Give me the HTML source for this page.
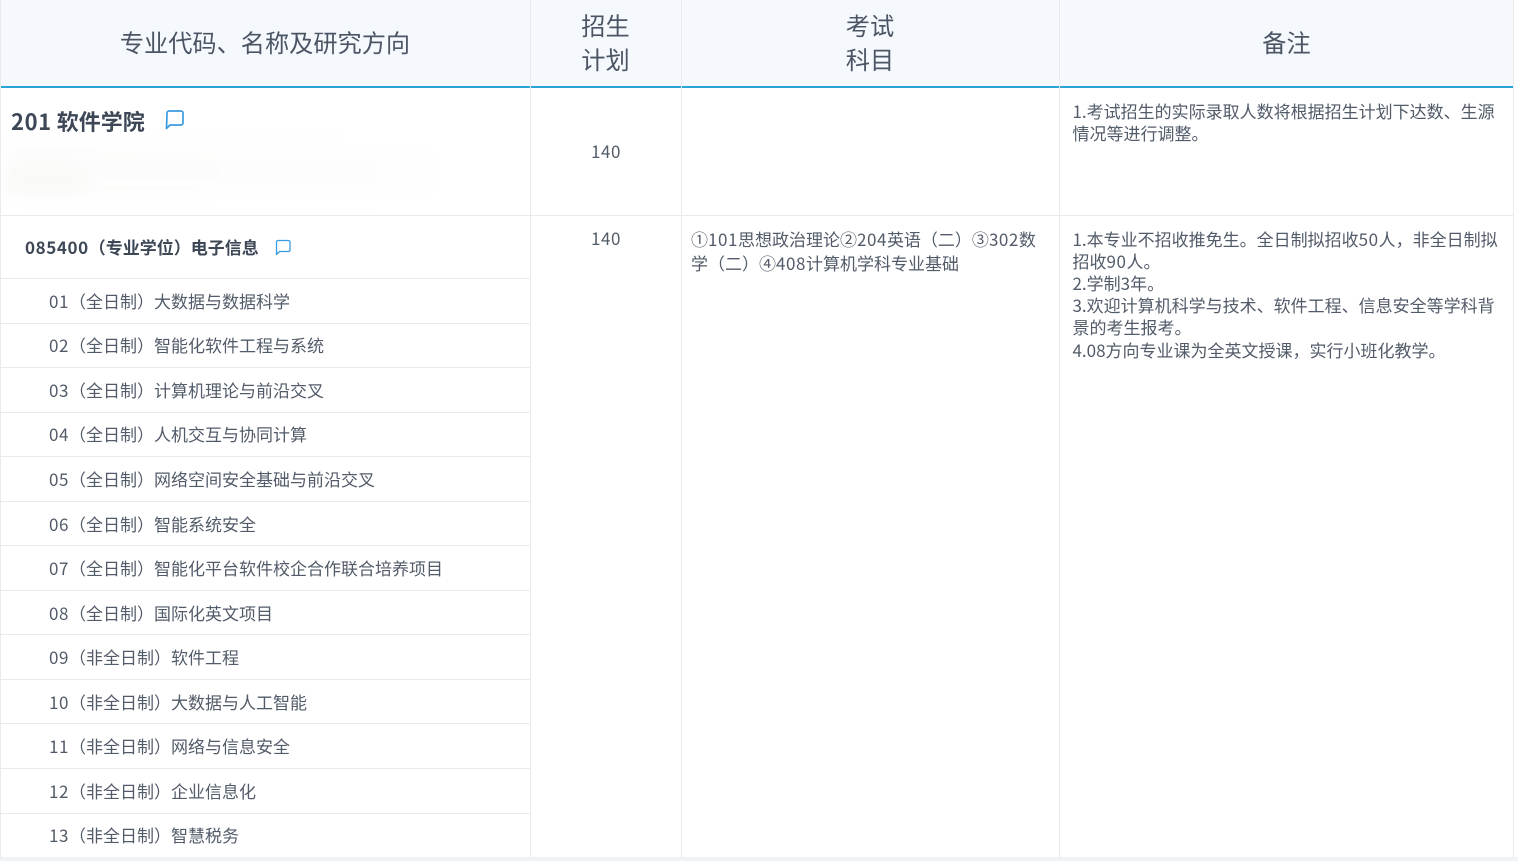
<!DOCTYPE html>
<html lang="zh-CN"><head><meta charset="utf-8"><title>专业目录</title>
<style>
html,body{margin:0;padding:0;background:#fff}
body{width:1518px;height:861px;position:relative;overflow:hidden;font-family:"Noto Sans CJK SC","Liberation Sans",sans-serif;color:#525b69;font-size:17px;font-weight:400}
.a{position:absolute}
.t{position:absolute;white-space:nowrap;line-height:22px}
.hd{position:absolute;color:#4c5564;font-size:24.2px;line-height:34px;text-align:center;font-weight:400}
.h{position:absolute;height:1px;background:#e8eaec}
.v{position:absolute;width:1px;background:#e8eaec}
.r{left:49px}
.n{position:absolute;white-space:pre-wrap;line-height:22.2px;width:430px}
i{font-style:normal;letter-spacing:.55px}
b{font-weight:700;color:#3d4756}
</style></head><body>
<div class="a" style="left:0;top:0;width:1513px;height:86px;background:#f5f9fe"></div>
<div class="a" style="left:0;top:86px;width:1513px;height:2px;background:#2aa3d8"></div>
<div class="v" style="left:0;top:0;height:857px"></div>
<div class="v" style="left:530px;top:0;height:857px"></div>
<div class="v" style="left:681px;top:0;height:857px"></div>
<div class="v" style="left:1059px;top:0;height:857px"></div>
<div class="v" style="left:1513px;top:0;height:857px"></div>
<div class="a" style="left:0;top:857px;width:1518px;height:4px;background:#f0f3f6"></div>

<div class="hd" style="left:0;top:24.500px;width:530px">专业代码、名称及研究方向</div>
<div class="hd" style="left:530.500px;top:7.500px;width:150px">招生<br>计划</div>
<div class="hd" style="left:681.500px;top:7.500px;width:377px">考试<br>科目</div>
<div class="hd" style="left:1060px;top:24.500px;width:453px">备注</div>

<div class="t" style="left:11px;top:106.500px;font-size:22px;line-height:28px"><b><span style="letter-spacing:.6px">201</span> 软件学院</b></div>
<svg class="a" style="left:164px;top:109px" width="22" height="22" viewBox="0 0 22 22" fill="none" stroke="#3a9be0" stroke-width="1.7" stroke-linejoin="round"><path d="M3 4.500a2 2 0 0 1 2-2h12a2 2 0 0 1 2 2v10a2 2 0 0 1-2 2H6L2.500 20z" transform="translate(0 -.5)"/></svg>
<div class="a" style="left:5px;top:146px;width:430px;height:50px;background:linear-gradient(90deg,#fbfbfa,#fdfdfd 60%,#fefefe);filter:blur(6px);opacity:.7"></div>
<div class="a" style="left:10px;top:168px;width:75px;height:24px;background:#f9f9f7;filter:blur(6px)"></div>

<div class="t" style="left:591px;top:139.500px"><i>140</i></div>
<div class="t" style="left:591px;top:226.500px"><i>140</i></div>

<div class="n" style="left:1072.500px;top:100px">1.考试招生的实际录取人数将根据招生计划下达数、生源
情况等进行调整。</div>

<div class="h" style="left:0;top:215px;width:1513px"></div>

<div class="t" style="left:25px;top:236px"><b><span style="letter-spacing:.6px">085400</span>（专业学位）电子信息</b></div>
<svg class="a" style="left:275px;top:239px" width="17" height="17" viewBox="0 0 17 17" fill="none" stroke="#3a9be0" stroke-width="1.3" stroke-linejoin="round"><path d="M1.500 3a1.500 1.500 0 0 1 1.500-1.500h10.500a1.500 1.500 0 0 1 1.500 1.500v8a1.500 1.500 0 0 1-1.500 1.500H4.500L1.500 15.500z"/></svg>

<div class="h" style="left:0;top:278px;width:530px"></div>
<div class="h" style="left:0;top:323px;width:530px"></div>
<div class="h" style="left:0;top:367px;width:530px"></div>
<div class="h" style="left:0;top:412px;width:530px"></div>
<div class="h" style="left:0;top:456px;width:530px"></div>
<div class="h" style="left:0;top:501px;width:530px"></div>
<div class="h" style="left:0;top:545px;width:530px"></div>
<div class="h" style="left:0;top:590px;width:530px"></div>
<div class="h" style="left:0;top:634px;width:530px"></div>
<div class="h" style="left:0;top:679px;width:530px"></div>
<div class="h" style="left:0;top:723px;width:530px"></div>
<div class="h" style="left:0;top:768px;width:530px"></div>
<div class="h" style="left:0;top:813px;width:530px"></div>

<div class="t r" style="top:290px"><i>01</i>（全日制）大数据与数据科学</div>
<div class="t r" style="top:334px"><i>02</i>（全日制）智能化软件工程与系统</div>
<div class="t r" style="top:379px"><i>03</i>（全日制）计算机理论与前沿交叉</div>
<div class="t r" style="top:423px"><i>04</i>（全日制）人机交互与协同计算</div>
<div class="t r" style="top:468px"><i>05</i>（全日制）网络空间安全基础与前沿交叉</div>
<div class="t r" style="top:513px"><i>06</i>（全日制）智能系统安全</div>
<div class="t r" style="top:557px"><i>07</i>（全日制）智能化平台软件校企合作联合培养项目</div>
<div class="t r" style="top:602px"><i>08</i>（全日制）国际化英文项目</div>
<div class="t r" style="top:646px"><i>09</i>（非全日制）软件工程</div>
<div class="t r" style="top:691px"><i>10</i>（非全日制）大数据与人工智能</div>
<div class="t r" style="top:735px"><i>11</i>（非全日制）网络与信息安全</div>
<div class="t r" style="top:780px"><i>12</i>（非全日制）企业信息化</div>
<div class="t r" style="top:824px"><i>13</i>（非全日制）智慧税务</div>

<div class="n" style="left:691px;top:226.500px;width:350px;line-height:24px">①<i>101</i>思想政治理论②<i>204</i>英语（二）③<i>302</i>数
学（二）④<i>408</i>计算机学科专业基础</div>

<div class="n" style="left:1072.500px;top:227.500px;width:430px">1.本专业不招收推免生。全日制拟招收<i>50</i>人，非全日制拟
招收<i>90</i>人。
2.学制3年。
3.欢迎计算机科学与技术、软件工程、信息安全等学科背
景的考生报考。
4.08方向专业课为全英文授课，实行小班化教学。</div>
</body></html>
